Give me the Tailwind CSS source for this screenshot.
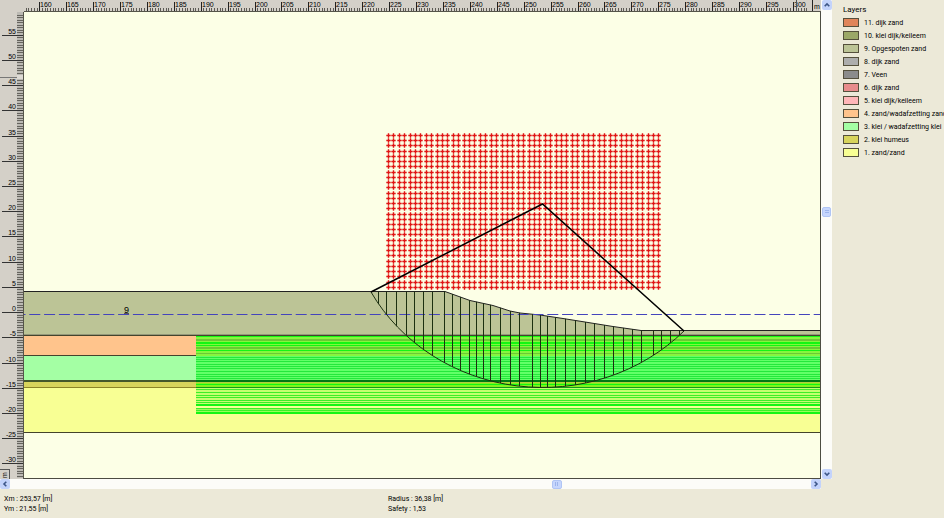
<!DOCTYPE html>
<html lang="nl">
<head>
<meta charset="utf-8">
<title>Slip circle result</title>
<script src="https://cdn.jsdelivr.net/npm/@tailwindcss/browser@4"></script>
</head>
<body class="flex h-screen overflow-hidden bg-[#ece9d8] font-['Liberation_Sans',Arial,sans-serif] text-[7px] leading-[10px] text-black">
<main class="flex min-w-0 flex-1 flex-col">
  <div class="flex min-h-0 flex-1">
    <div class="flex min-w-0 flex-1 flex-col bg-[#d4d0c8]">
      <svg id="top" class="block h-3 w-full shrink-0" role="img" aria-label="Horizontal ruler"></svg>
      <div class="flex min-h-0 flex-1">
        <div class="relative w-6 shrink-0">
          <svg id="side" class="block h-full w-full" role="img" aria-label="Vertical ruler"></svg>
          <span class="absolute bottom-0 left-0 flex h-[10px] w-[10px] items-center justify-center border-t border-r border-[#555] bg-[#d4d0c8]"><span class="-rotate-90">m</span></span>
        </div>
        <svg id="plot" class="block h-full min-w-0 flex-1 border-r border-b border-[#4c4c42] bg-[#fcffe6]" role="img" aria-label="Cross section with slip circle"></svg>
      </div>
    </div>
    <div class="flex w-[11px] shrink-0 flex-col items-center justify-between bg-[#fcfcf8]">
      <button aria-label="Scroll up" class="flex h-[10px] w-[10px] items-center justify-center rounded-[2px] bg-[#c3d3fb]"><svg class="h-[6px] w-[6px]" viewBox="0 0 6 6" fill="none" stroke="#3d5688" stroke-width="1.6"><path d="M.7 4.3 3 2l2.3 2.3"/></svg></button>
      <div class="flex w-full flex-1 flex-col items-center" role="scrollbar" aria-label="Vertical scroll" aria-controls="plot" aria-valuenow="43">
        <div class="flex-[197]"></div>
        <div class="flex h-[10px] w-[9px] flex-col items-center justify-center gap-px rounded-[2px] border border-[#b0c5f5] bg-[#c6d6fd]"><i class="h-px w-1 bg-[#9db5ec]"></i><i class="h-px w-1 bg-[#9db5ec]"></i></div>
        <div class="flex-[253]"></div>
      </div>
      <button aria-label="Scroll down" class="flex h-[10px] w-[10px] items-center justify-center rounded-[2px] bg-[#c3d3fb]"><svg class="h-[6px] w-[6px]" viewBox="0 0 6 6" fill="none" stroke="#3d5688" stroke-width="1.6"><path d="M.7 1.7 3 4l2.3-2.3"/></svg></button>
    </div>
  </div>
  <div class="mr-[11px] flex h-[10px] shrink-0 items-center bg-[#fcfcf8]">
    <button aria-label="Scroll left" class="flex h-[10px] w-[10px] items-center justify-center rounded-[2px] bg-[#c3d3fb]"><svg class="h-[6px] w-[6px]" viewBox="0 0 6 6" fill="none" stroke="#3d5688" stroke-width="1.6"><path d="M4.3.7 2 3l2.3 2.3"/></svg></button>
    <div class="flex flex-1 items-center" role="scrollbar" aria-label="Horizontal scroll" aria-controls="plot" aria-valuenow="68">
      <div class="flex-[541]"></div>
      <div class="flex h-[9px] w-[10px] items-center justify-center gap-px rounded-[2px] border border-[#b0c5f5] bg-[#c6d6fd]"><i class="h-1 w-px bg-[#9db5ec]"></i><i class="h-1 w-px bg-[#9db5ec]"></i></div>
      <div class="flex-[249]"></div>
    </div>
    <button aria-label="Scroll right" class="flex h-[10px] w-[10px] items-center justify-center rounded-[2px] bg-[#c3d3fb]"><svg class="h-[6px] w-[6px]" viewBox="0 0 6 6" fill="none" stroke="#3d5688" stroke-width="1.6"><path d="M1.7.7 4 3 1.7 5.3"/></svg></button>
  </div>
  <footer class="grid shrink-0 grid-cols-[384px_1fr] px-1 pt-[5px] pb-1 font-[Roboto,'Liberation_Sans',sans-serif]">
    <p>Xm : 253,57 [m]</p><p>Radius : 36,38 [m]</p>
    <p>Ym : 21,55 [m]</p><p>Safety : 1,53</p>
  </footer>
</main>
<aside class="w-[112px] shrink-0 overflow-hidden pt-1 pl-[11px] font-[Roboto,'Liberation_Sans',sans-serif]">
  <h2 class="text-[8px] leading-[12px]">Layers</h2>
  <ul id="legend"></ul>
</aside>
<script>
const layers = [['#e0855a','11. dijk zand'],['#9ca868','10. klei dijk/keileem'],['#bcc496','9. Opgespoten zand'],['#adadad','8. dijk zand'],['#8b8b8b','7. Veen'],['#e88c8c','6. dijk zand'],['#ffb6b8','5. klei dijk/keileem'],['#ffc48c','4. zand/wadafzetting zand'],['#a4ffa4','3. klei / wadafzetting klei'],['#d8d45c','2. klei humeus'],['#f8ff94','1. zand/zand']];
document.getElementById('legend').innerHTML = layers.map(([c, t]) =>
  `<li class="flex h-[13px] items-center gap-[5px] whitespace-nowrap"><i class="h-[9px] w-[16px] shrink-0 border border-[#55503c]" style="background:${c}"></i>${t}</li>`).join('');

const line = (x1, y1, x2, y2, c = '#222', w = 1) => `<line x1="${x1}" y1="${y1}" x2="${x2}" y2="${y2}" stroke="${c}" stroke-width="${w}"/>`;
const rect = (x, y, w, h, c) => `<rect x="${x}" y="${y}" width="${w}" height="${h}" fill="${c}"/>`;
const snap = v => Math.floor(v) + 0.5;

// Horizontal ruler: 5.38 px per metre, half-metre ticks
const X = v => 39.7 + (v - 160) * 5.383;
let s = '';
for (let v = 157.5; v <= 302.5; v += 0.5) s += line(snap(X(v)), 8, snap(X(v)), 11, '#5c5a54');
for (let v = 160; v <= 300; v += 5) s += line(snap(X(v)), 2, snap(X(v)), 11) + `<text x="${Math.floor(X(v)) + 1}" y="7">${v}</text>`;
s += line(796.5, 0, 796.5, 11, '#555') + line(812.5, 0, 812.5, 11) + '<text x="814" y="9">m</text>';
s += `<rect x="24" y="11" width="100%" height="1" fill="#55554a"/>`;
document.getElementById('top').innerHTML = s;

// Vertical ruler: 5.04 px per metre
const Y = v => 300.6 - v * 5.043;
s = rect(17, 0, 7, 466, '#bcbab4');
for (let v = 59; v > -33; v -= 0.5) s += line(17, snap(Y(v)), 23, snap(Y(v)), '#66645e');
s += rect(17, 63, 6, 4, '#dddad4') + line(0, 65.5, 17, 65.5, '#777');
for (let v = 55; v >= -30; v -= 5) s += line(2, snap(Y(v)), 23, snap(Y(v)), '#333') + `<text x="16" y="${Math.floor(Y(v)) - 1}" text-anchor="end">${v}</text>`;
s += `<rect x="23" y="0" width="1" height="100%" fill="#55554a"/>`;
document.getElementById('side').innerHTML = s;

// Soil layers
const surface = '445,291.5 470,300.5 493,305.5 510,311 520,313 540,315 563,318.5 585,322 613,326.5 641,330.5';
const full = (y, h, c) => `<rect x="24" y="${y}" width="100%" height="${h}" fill="${c}"/>`;
let p = '<g transform="translate(-24 -12)">';
p += `<polygon points="24,291.5 ${surface} 4000,330.5 4000,335 24,335" fill="#bcc496"/>`;
p += full(336, 19, '#ffc48c') + full(356, 24, '#a4ffa4') + full(382, 5, '#d8d45c') + full(388, 44, '#f8ff94');
const g = (y, h, c) => `<rect x="196" y="${y}" width="100%" height="${h}" fill="${c}"/>`;
p += g(336, 20, '#86f63e') + g(356, 25, '#62ff68') + g(382, 6, '#80f41c') + g(388, 18, '#c4ff70') + g(408, 5, '#98ff58');
[[336,1],[342,2],[345,1],[350,1],[384,1],[404,2],[412,2]].forEach(([y, h]) => p += g(y, h, '#14f614'));
[[339,2],[347,2],[353,1]].forEach(([y, h]) => p += g(y, h, '#6cc836'));
[357,359,361,364,366,368,371,374,376,378].forEach(y => p += g(y, 1, '#24e83c'));
[389,392,395,397,400,402,408,410].forEach(y => p += g(y, 1, '#3cee28'));
p += g(382, 1, '#b4cc3c');
p += full(335, 1, '#44442c') + full(334, 1, '#94987a') + `<rect x="24" y="355" width="172" height="1" fill="#44442c"/>` + `<rect x="24" y="380" width="172" height="2" fill="#44582c"/>` + g(380, 2, '#007814') + `<rect x="24" y="387" width="172" height="1" fill="#8c8428"/>` + g(387, 1, '#14981c') + full(432, 1, '#44442c');
p += `<polyline points="24,291.5 ${surface} 4000,330.5" fill="none" stroke="#222"/>`;
p += `<line x1="14.5" y1="314.5" x2="4000" y2="314.5" stroke="#4444bc" stroke-dasharray="11 3.8"/>`;
p += `<text x="124" y="313" font-size="9">9</text>` + line(124, 313.5, 129, 313.5, '#555');

// Grid of circle centres
let d = '';
for (let i = 0; i < 51; i++) for (let j = 0; j < 30; j++) {
  const x = snap(388.4 + i * 5.41), y = snap(135.5 + j * 5.235);
  d += `M${x - 2.2} ${y}h4.4M${x} ${y - 2.2}v4.4`;
}
p += `<path d="${d}" stroke="#e01414" stroke-width="1.4" fill="none"/>`;

// Slices between ground surface and slip circle
const pts = ('371,291.5 ' + surface + ' 684,330.5').split(' ').map(q => q.split(',').map(Number));
const ground = x => { for (let i = 1; i < pts.length; i++) if (x <= pts[i][0]) { const [a, b] = [pts[i - 1], pts[i]]; return a[1] + (b[1] - a[1]) * (x - a[0]) / (b[0] - a[0]); } };
const arc = x => 204 + 183.4 * Math.sqrt(1 - ((x - 542.5) / 195.7) ** 2);
[378,386,396,406,414,423,432,444,452,460,469,476,483,490,500,510,519,532,540,547,555,565,575,585,594,604,613,623,632,641,653,661,670,679].forEach(x => p += line(x + 0.5, ground(x), x + 0.5, arc(x + 0.5), '#1c3010'));
p += '<path d="M371 292A195.7 183.4 0 0 0 684 331" fill="none" stroke="#1c3010"/>';
p += '<path d="M371 292L542.5 204L684 331" fill="none" stroke="#000" stroke-width="1.5"/></g>';
document.getElementById('plot').innerHTML = p;
</script>
</body>
</html>
